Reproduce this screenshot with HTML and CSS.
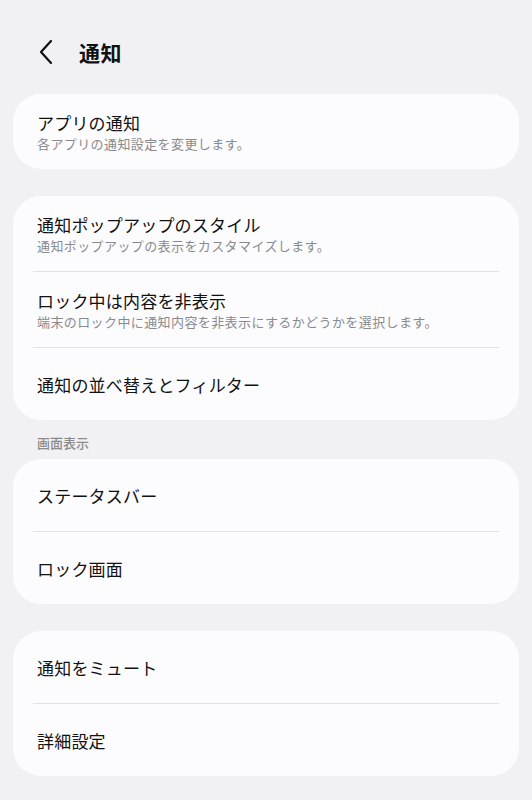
FILE: index.html
```html
<!DOCTYPE html>
<html lang="ja">
<head>
    <meta charset="UTF-8">
    <meta name="viewport" content="width=device-width, initial-scale=1.0">
    <title>通知</title>
    <link rel="stylesheet" href="styles.css">
</head>
<body>
    <div class="page">
        <div class="header">
            <svg class="back-icon" width="16" height="26" viewBox="0 0 16 26">
                <path d="M13 2 L3 13 L13 24" fill="none" stroke="#111" stroke-width="2.2" stroke-linecap="round" stroke-linejoin="round"/>
            </svg>
            <div class="header-title">通知</div>
        </div>

        <div class="card">
            <div class="row">
                <div class="row-title">アプリの通知</div>
                <div class="row-sub">各アプリの通知設定を変更します。</div>
            </div>
        </div>

        <div class="card">
            <div class="row">
                <div class="row-title">通知ポップアップのスタイル</div>
                <div class="row-sub">通知ポップアップの表示をカスタマイズします。</div>
            </div>
            <div class="divider"></div>
            <div class="row">
                <div class="row-title">ロック中は内容を非表示</div>
                <div class="row-sub">端末のロック中に通知内容を非表示にするかどうかを選択します。</div>
            </div>
            <div class="divider"></div>
            <div class="row single">
                <div class="row-title">通知の並べ替えとフィルター</div>
            </div>
        </div>

        <div class="section-label">画面表示</div>

        <div class="card">
            <div class="row single">
                <div class="row-title">ステータスバー</div>
            </div>
            <div class="divider"></div>
            <div class="row single">
                <div class="row-title">ロック画面</div>
            </div>
        </div>

        <div class="card">
            <div class="row single">
                <div class="row-title">通知をミュート</div>
            </div>
            <div class="divider"></div>
            <div class="row single">
                <div class="row-title">詳細設定</div>
            </div>
        </div>
    </div>
</body>
</html>
```

FILE: styles.css
```css
body {
    font-family: "Noto Sans CJK JP", "Noto Sans", sans-serif;
    margin: 0;
    background-color: #f1f1f3;
    color: #111;
}
.page {
    padding: 0 13px;
}
.header {
    display: flex;
    align-items: center;
    height: 56px;
    padding: 24px 0 14px 25px;
}
.back-icon {
    display: block;
}
.header-title {
    margin-left: 25px;
    font-size: 21px;
    font-weight: 700;
    letter-spacing: 0.5px;
}
.card {
    background: #fcfcfe;
    border-radius: 28px;
    margin-bottom: 27px;
}
.row {
    padding: 17px 24px;
    display: flex;
    flex-direction: column;
    justify-content: center;
}
.row.single {
    min-height: 72px;
    padding-top: 0;
    padding-bottom: 0;
}
.row-title {
    font-size: 17px;
    line-height: 23px;
    letter-spacing: 0.2px;
}
.row-sub {
    font-size: 13px;
    line-height: 17px;
    color: #8a8a8c;
    margin-top: 1px;
    letter-spacing: 0.4px;
}
.divider {
    height: 1px;
    background: #e2e2e4;
    margin: 0 20px;
}
.section-label {
    font-size: 13px;
    font-weight: 500;
    color: #8a8a8c;
    padding: 0 24px;
    margin-top: -15px;
    margin-bottom: 5px;
    line-height: 22px;
}
```
